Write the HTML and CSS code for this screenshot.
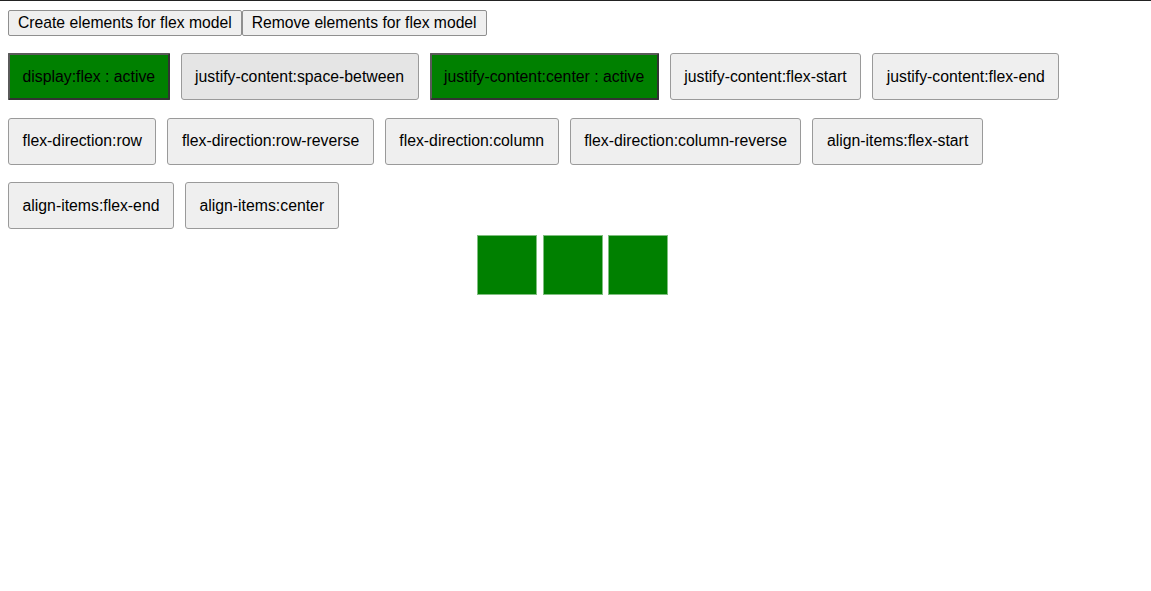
FILE: index.html
```html
<!DOCTYPE html>
<html>
<head>
<meta charset="utf-8">
<link rel="stylesheet" href="styles.css">
</head>
<body>
<div class="page">
  <div class="top-actions"><button class="small-btn">Create elements for flex model</button><button class="small-btn">Remove elements for flex model</button></div>
  <div class="controls">
    <button class="ctl active">display:flex : active</button>
    <button class="ctl hover">justify-content:space-between</button>
    <button class="ctl active">justify-content:center : active</button>
    <button class="ctl">justify-content:flex-start</button>
    <button class="ctl">justify-content:flex-end</button>
    <button class="ctl">flex-direction:row</button>
    <button class="ctl">flex-direction:row-reverse</button>
    <button class="ctl">flex-direction:column</button>
    <button class="ctl">flex-direction:column-reverse</button>
    <button class="ctl">align-items:flex-start</button>
    <button class="ctl">align-items:flex-end</button>
    <button class="ctl">align-items:center</button>
  </div>
  <div class="flex-model">
    <div class="box"></div>
    <div class="box"></div>
    <div class="box"></div>
  </div>
</div>
</body>
</html>
```

FILE: styles.css
```css
html, body {
  margin: 0;
  padding: 0;
  background: #fff;
}
body {
  border-top: 1px solid #222;
  font-family: "Liberation Sans", Arial, sans-serif;
}
.page {
  padding: 9px 8px 0 8px;
}
.top-actions {
  display: flex;
  margin-bottom: 17px;
}
.small-btn {
  font-family: "Liberation Sans", Arial, sans-serif;
  font-size: 15.7px;
  line-height: 18px;
  height: 26px;
  padding: 3px 9px;
  background: #efefef;
  border: 1px solid #8f8f8f;
  border-radius: 2px;
  color: #000;
  margin: 0;
}
.controls {
  display: flex;
  flex-wrap: wrap;
  column-gap: 11px;
  row-gap: 17.5px;
}
.ctl {
  font-family: "Liberation Sans", Arial, sans-serif;
  font-size: 15.8px;
  line-height: 18px;
  height: 47px;
  padding: 0 13.5px;
  margin: 0;
  background: #efefef;
  border: 1px solid #9a9a9a;
  border-radius: 3px;
  color: #000;
}
.ctl.hover {
  background: #e5e5e5;
}
.ctl.active {
  background: #008000;
  border: 2px solid #333;
  border-top-color: #5a5a5a;
  border-left-color: #5a5a5a;
  border-radius: 1px;
  padding: 0 12.5px;
}
.flex-model {
  display: flex;
  justify-content: center;
  gap: 5.5px;
  margin-top: 5.5px;
  padding-right: 6px;
}
.box {
  width: 58px;
  height: 58px;
  background: #008000;
  border: 1px solid #7fbf7f;
}
```
